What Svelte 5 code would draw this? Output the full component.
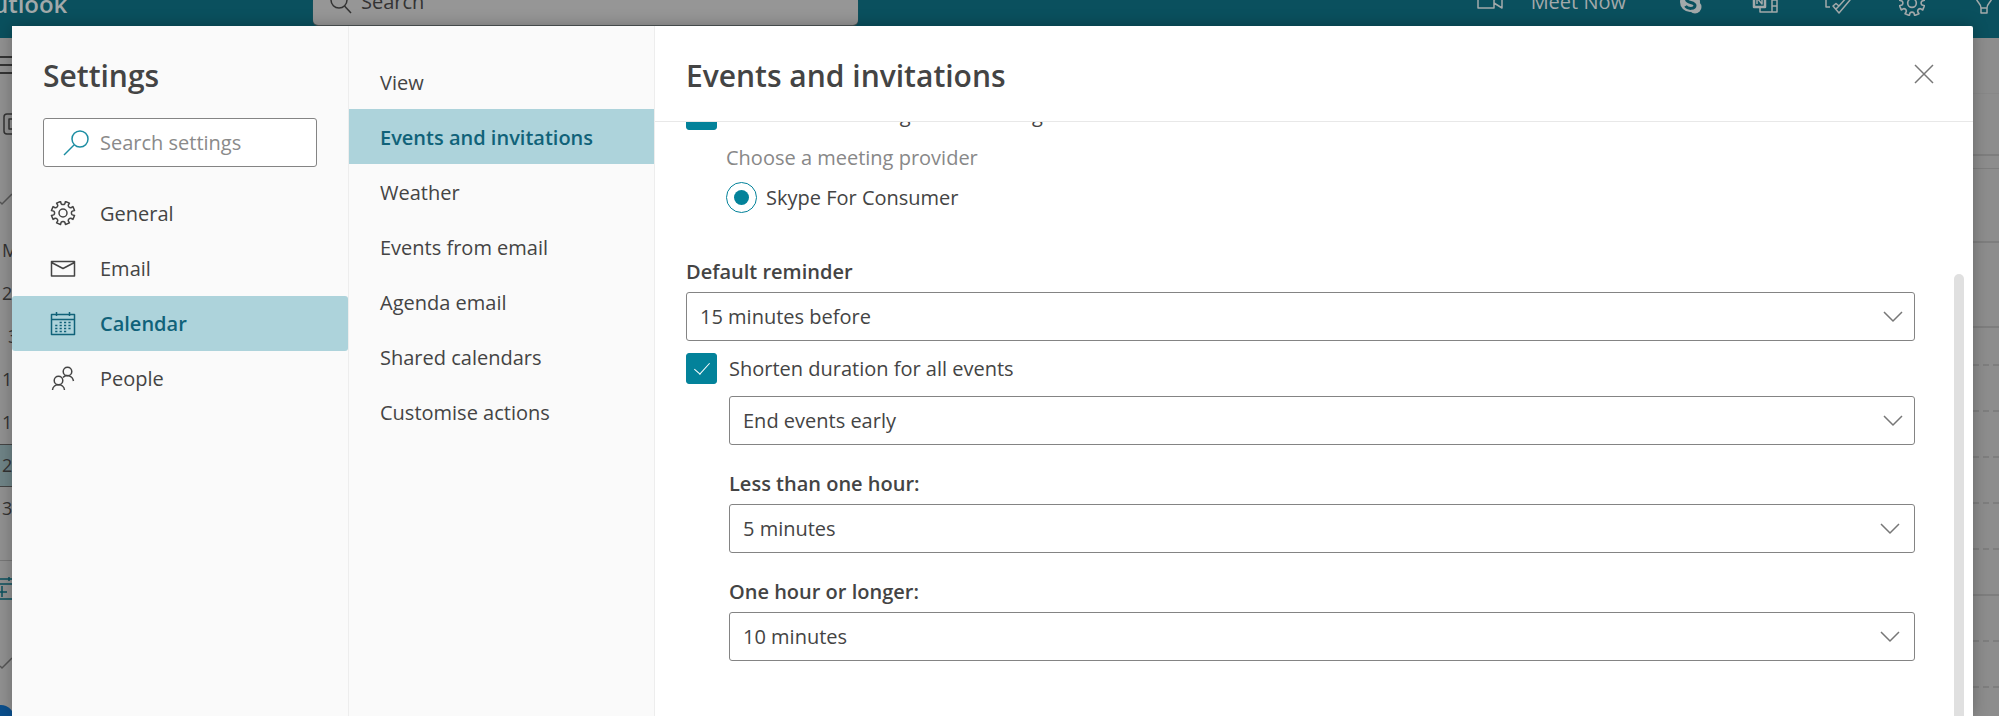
<script>
  const sections = ['General', 'Email', 'Calendar', 'People'];
  const pages = ['View', 'Events and invitations', 'Weather', 'Events from email', 'Agenda email', 'Shared calendars', 'Customise actions'];
  const hours = ['dash', 'dash', 'dash', 'dash', 'line', 'dash', 'dash'];

  // Outline of a cog: each tooth is a flat tip joined to the next by a rounded valley.
  function gearPath(cx, cy, outer, inner, teeth) {
    const step = (Math.PI * 2) / teeth;
    let d = '';
    for (let i = 0; i < teeth; i++) {
      const a = (i + 0.5) * step - Math.PI / 2;
      const pts = [[a - step * 0.25, inner], [a - step * 0.23, outer], [a + step * 0.23, outer], [a + step * 0.25, inner]];
      pts.forEach(([t, r], k) => {
        const x = (cx + r * Math.cos(t)).toFixed(2);
        const y = (cy + r * Math.sin(t)).toFixed(2);
        if (!d) d += `M${x} ${y}`;
        else if (k === 0) d += `A2.3 2.3 0 0 0 ${x} ${y}`;
        else d += `L${x} ${y}`;
      });
    }
    return d + 'A2.3 2.3 0 0 0 ' + (cx + inner * Math.cos(0.25 * step - Math.PI / 2)).toFixed(2) + ' ' + (cy + inner * Math.sin(0.25 * step - Math.PI / 2)).toFixed(2) + 'Z';
  }
  const gearD = gearPath(12, 12, 11.8, 9.5, 8);
  let section = $state('Calendar');
  let page = $state('Events and invitations');
  let addOnline = $state(true);
  let shorten = $state(true);
</script>

<div class="app">
  <header class="top">
    <div class="brand">Outlook</div>
    <div class="topsearch">
      <svg width="24" height="24" viewBox="0 0 24 24"><circle cx="10" cy="8" r="8" /><path d="M15.500 14 22 21" /></svg>
      <span>Search</span>
    </div>
    <div class="tools">
      <svg width="28" height="24" viewBox="0 0 28 24"><path d="M1 4H17V18H1ZM17 10 25 5V18L17 13" /></svg>
      <span>Meet Now</span>
      <svg class="skype" width="26" height="26" viewBox="0 0 26 26"><circle cx="13" cy="12" r="10" /><circle cx="18" cy="17" r="6.500" /><path d="M18 8C15 5 9.500 6 9.500 9.500S18 12 18 15.500 11 19.500 8.500 16" /></svg>
      <svg width="28" height="26" viewBox="0 0 28 26"><path stroke-width="2.500" d="M3 4H14V17H3Z" /><path d="M6 14V8L11 14V8M14 3H26V22H9V17M21 3V22M21 10H26M21 16H26" /></svg>
      <svg class="todo" width="28" height="26" viewBox="0 0 28 26"><path d="M7 17H3V3H22M10 16 13 13.500 16 16 24 7 27 10 16 23ZM16 16 13 19" /></svg>
      <svg width="26" height="26" viewBox="0 0 24 24"><path d={gearD} /><circle cx="12" cy="12" r="4" /></svg>
      <svg width="22" height="26" viewBox="0 0 22 26"><path d="M8 18C8 13 3 12 3 7A8 8 0 0 1 19 7C19 12 14 13 14 18V23H8ZM8 18H14" /></svg>
    </div>
  </header>
  <div class="back">
    <div class="mini">
      <div class="burger"><i></i><i></i><i></i></div>
      <div class="newicon"><svg width="22" height="22" viewBox="0 0 22 22"><rect x="1" y="1" width="20" height="20" rx="3" /><path d="M20 6H6V16H20M9 10H20" /></svg></div>
      <div class="tick"><svg width="14" height="14" viewBox="0 0 14 14"><path d="M0 9 2 11 12 1" /></svg></div>
      <div class="days">
        <span>M</span><span>2</span><span class="late">3</span><span>1</span><span>1</span><span class="today">2</span><span>3</span>
      </div>
      <div class="addcal"><svg width="14" height="26" viewBox="0 0 14 26"><path d="M0 4H13M0 9H14M9 2V6M0 24H14M2 11V22M0 17H7" /></svg></div>
      <div class="tick low"><svg width="14" height="14" viewBox="0 0 14 14"><path d="M0 9 2 11 12 1" /></svg></div>
      <div class="dot"></div>
    </div>
    <div class="grid">
      <b class="r1"></b><b class="r2"></b><b class="r3"></b><b class="r4"></b><b class="r5"></b><b class="r6 dash"></b>
      {#each hours as kind}<b class={kind}></b>{/each}
    </div>
  </div>
</div>

<div class="modal" role="dialog" aria-label="Settings">
  <nav class="side">
    <h2>Settings</h2>
    <label class="find">
      <svg width="26" height="26" viewBox="0 0 26 26"><circle cx="17" cy="9" r="8" /><path d="M11 15 1 25" /></svg>
      <input type="text" placeholder="Search settings" aria-label="Search settings" />
    </label>
    <div class="list">
      {#each sections as s}
        <button class:on={section === s} onclick={() => (section = s)}>
          <svg width="26" height="26" viewBox="0 0 26 26">
            {#if s === 'General'}
              <g transform="translate(1 0)"><path d={gearD} /><circle cx="12" cy="12" r="4" /></g>
            {:else if s === 'Email'}
              <path d="M1.500 5.500H24.500V20H1.500ZM1.500 6.500 13 12.500 24.500 6.500" />
            {:else if s === 'Calendar'}
              <path d="M1.500 3.500H24.500V23.500H1.500ZM1.500 8.500H24.500M6.500 1V5M19.500 1V5" />
              <path stroke-dasharray="2.200 2.200" d="M9.600 11.500H21M5.200 14.500H21M5.200 17.500H21M5.200 20.500H16.500" />
            {:else}
              <circle cx="17.500" cy="5.500" r="4.300" /><circle cx="8.500" cy="14.500" r="4.300" /><path d="M2.500 24C3 17 14 17 14.500 24M13 11.500C16 8 22.500 9.500 23.500 15" />
            {/if}
          </svg>
          <span>{s}</span>
        </button>
      {/each}
    </div>
  </nav>

  <nav class="pages">
    {#each pages as p}
      <button class:on={page === p} onclick={() => (page = p)}>{p}</button>
    {/each}
  </nav>

  <section class="main">
    <div class="head">
      <h2>Events and invitations</h2>
      <button class="close" aria-label="Close"><svg width="20" height="20" viewBox="0 0 20 20"><path d="M1 1 19 19M19 1 1 19" /></svg></button>
    </div>
    <div class="body">
      <div class="form">
        <label class="check first"><input type="checkbox" bind:checked={addOnline} /><span>Add online meeting to all meetings</span></label>
        <div class="provider">
          <div class="hint">Choose a meeting provider</div>
          <label class="radio"><input type="radio" name="provider" checked /><span>Skype For Consumer</span></label>
        </div>
        <label class="title" for="rem">Default reminder</label>
        <div class="pick">
          <select id="rem"><option>15 minutes before</option></select>
          <svg width="20" height="12" viewBox="0 0 20 12"><path d="M1 1 10 10 19 1" /></svg>
        </div>
        <label class="check second"><input type="checkbox" bind:checked={shorten} /><span>Shorten duration for all events</span></label>
        <div class="indent">
          <div class="pick">
            <select aria-label="Shorten duration"><option>End events early</option></select>
            <svg width="20" height="12" viewBox="0 0 20 12"><path d="M1 1 10 10 19 1" /></svg>
          </div>
          <label class="title" for="less">Less than one hour:</label>
          <div class="pick inner">
            <select id="less"><option>5 minutes</option></select>
            <svg width="20" height="12" viewBox="0 0 20 12"><path d="M1 1 10 10 19 1" /></svg>
          </div>
          <label class="title" for="more">One hour or longer:</label>
          <div class="pick inner">
            <select id="more"><option>10 minutes</option></select>
            <svg width="20" height="12" viewBox="0 0 20 12"><path d="M1 1 10 10 19 1" /></svg>
          </div>
        </div>
      </div>
      <div class="bar"></div>
    </div>
  </section>
</div>

<style>
  :global(body) { overflow: hidden; background: #919191; }
  * { box-sizing: border-box; }
  .app, .modal { font-family: "Open Sans", "Noto Sans", sans-serif; font-size: 20px; color: #444; }
  svg { fill: none; stroke: currentColor; stroke-width: 1.5; stroke-linejoin: round; flex: none; }
  button, input, select { font: inherit; color: inherit; }
  h2 { margin: 0; font-size: 30px; font-weight: 600; line-height: 40px; }

  .app { position: fixed; inset: 0; display: flex; flex-direction: column; }
  .top { flex: none; height: 38px; background: #0a505e; color: #a3a9aa; display: flex; align-items: flex-start; overflow: hidden; }
  .brand { flex: none; width: 339px; margin: -13px 0 0 -26px; font-size: 24px; font-weight: 600; line-height: 34px; }
  .topsearch { flex: none; width: 545px; height: 25px; background: #969696; border-radius: 0 0 5px 5px; color: #333; display: flex; align-items: flex-start; gap: 8px; padding-left: 16px; box-shadow: 0 1px 1px #555; }
  .topsearch svg { margin-top: -8px; }
  .topsearch span, .tools span { line-height: 28px; margin-top: -12px; }
  .tools { margin-left: auto; display: flex; align-items: flex-start; gap: 48px; padding-right: 4px; }
  .tools span { margin-left: -22px; }
  .tools svg { margin-top: -10px; }
  .skype { margin-left: 3px; }
  .todo { margin-left: -4px; }
  .skype circle { fill: #a3a9aa; stroke: none; }
  .skype path { stroke: #0a505e; stroke-width: 3; }

  .back { flex: 1; min-height: 0; display: flex; justify-content: space-between; color: #333; background: #919191; }
  .mini { width: 13px; overflow: hidden; display: flex; flex-direction: column; }
  .burger { display: flex; flex-direction: column; gap: 6px; padding-top: 18px; }
  .burger i { height: 2px; background: #333; }
  .newicon { margin: 39px 0 0 3px; height: 22px; }
  .tick { margin-top: 58px; height: 14px; color: #555; }
  .tick svg { display: block; }
  .days { margin-top: 22px; display: flex; flex-direction: column; font-size: 18px; }
  .days span { height: 43px; line-height: 43px; padding-left: 2px; }
  .days .late { padding-left: 8px; }
  .days .today { background: #6f8487; border: solid #444; border-width: 1px 0; line-height: 41px; }
  .addcal { margin-top: 30px; padding-top: 14px; border-top: 1px solid #777; color: #0a505e; height: 50px; }
  .tick.low { margin-top: 50px; }
  .dot { flex: none; width: 26px; height: 26px; margin: 34px 0 0 -12px; border-radius: 50%; background: #0b4f8c; }
  .grid { width: 26px; display: flex; flex-direction: column; background: #8d8d8d; }
  .grid b { flex: none; height: 46px; border-bottom: 2px solid #7e7e7e; }
  .grid .r1 { height: 56px; border-bottom: 1px solid #888; }
  .grid .r2 { height: 62px; }
  .grid .r3 { height: 13px; border-bottom-width: 1px; }
  .grid .r4 { height: 74px; }
  .grid .r5 { height: 85px; }
  .grid .r6 { height: 38px; }
  .grid .dash { border-bottom-style: dashed; }

  .modal { position: fixed; inset: 26px 26px 0 12px; display: flex; background: #fff; border-radius: 2px 2px 0 0; box-shadow: 0 0 16px rgba(0, 0, 0, .28); }
  .side { flex: none; width: 337px; background: #fafafa; border-right: 1px solid #ededed; padding-top: 30px; }
  .side h2 { padding-left: 31px; }
  .find { margin: 22px 31px 0; height: 49px; display: flex; align-items: center; gap: 11px; padding: 0 19px; border: 1px solid #848484; border-radius: 3px; background: #fff; }
  .find svg { color: #1c8da2; }
  .find input { min-width: 0; flex: 1; border: 0; padding: 0; outline: 0; background: none; }
  .find input::placeholder { color: #8a8a8a; opacity: 1; }
  .list { margin-top: 19px; display: flex; flex-direction: column; }
  .side button { height: 55px; border: 0; border-radius: 3px; background: none; display: flex; align-items: center; gap: 24px; padding: 0 38px; text-align: left; }
  .side button.on, .pages button.on { background: #add3db; color: #106279; font-weight: 600; }
  .pages { flex: none; width: 306px; background: #fafafa; border-right: 1px solid #ededed; padding-top: 28px; display: flex; flex-direction: column; }
  .pages button { height: 55px; border: 0; background: none; text-align: left; padding: 2px 31px 0; white-space: nowrap; }

  .main { flex: 1; min-width: 0; display: flex; flex-direction: column; }
  .head { flex: none; height: 96px; display: flex; align-items: center; justify-content: space-between; padding: 0 39px 0 31px; border-bottom: 1px solid #e8e8e8; }
  .head h2 { padding-top: 4px; }
  .close { border: 0; background: none; padding: 0; display: flex; color: #777; }
  .body { flex: 1; min-height: 0; overflow: hidden; display: flex; }
  .form { flex: 1; min-width: 0; padding-left: 31px; margin-top: -23px; }
  .check, .radio { display: flex; align-items: center; height: 31px; gap: 12px; }
  .check input, .radio input { appearance: none; flex: none; margin: 0; width: 31px; height: 31px; border: 1px solid #03829a; border-radius: 3px; display: grid; place-items: center; }
  .check input:checked { background: #03829a; }
  .check input:checked::after { content: ""; width: 7px; height: 14px; border: solid #fff; border-width: 0 1px 1px 0; transform: rotate(42deg); margin-bottom: 5px; }
  .provider { padding-left: 40px; }
  .hint { line-height: 28px; margin-top: 14px; color: #888; }
  .radio { margin-top: 10px; gap: 9px; }
  .radio input { border-radius: 50%; }
  .radio input:checked::after { content: ""; width: 15px; height: 15px; border-radius: 50%; background: #03829a; }
  .title { display: block; font-weight: 600; line-height: 28px; }
  .form > .title { margin-top: 45px; margin-bottom: 6px; }
  .indent .title { margin: 25px 0 6px; }
  .pick { display: flex; align-items: center; height: 49px; position: relative; }
  .pick select { appearance: none; width: 100%; height: 49px; padding: 0 50px 0 13px; border: 1px solid #848484; border-radius: 3px; background: #fff; }
  .pick svg { position: absolute; right: 12px; color: #777; pointer-events: none; }
  .pick.inner svg { right: 15px; }
  .check.second { margin-top: 12px; }
  .indent { padding-left: 43px; margin-top: 12px; }
  .bar { flex: none; width: 10px; margin: 152px 9px 0 39px; border-radius: 5px 5px 0 0; background: #e0e0e0; }
</style>
